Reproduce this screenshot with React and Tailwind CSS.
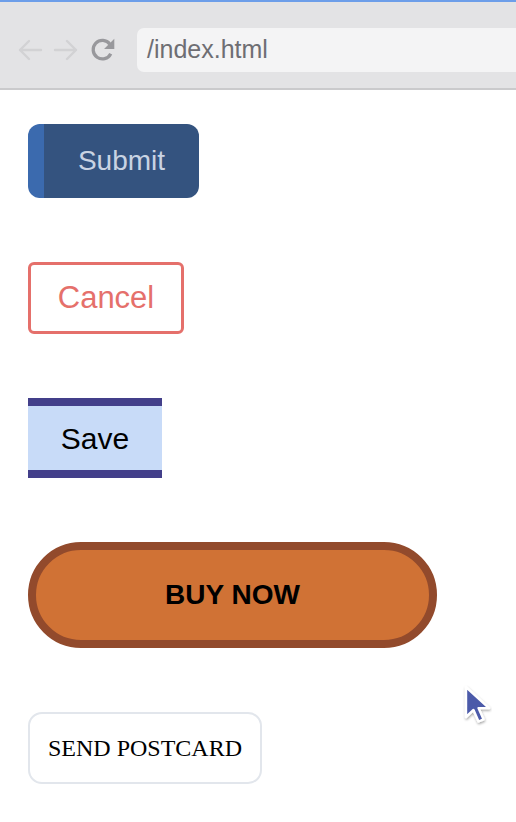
// App.jsx
// Browser chrome strip + a column of five differently styled buttons.

function Toolbar() {
  return (
    <div className="h-[90px] overflow-hidden bg-[#e3e3e5] border-t-2 border-[#6d9ee9] border-b-2 border-b-[#cacacc] flex items-center pt-[10px]">
      {/* back / forward / reload */}
      <div className="flex items-center pl-[17px] gap-[10px] shrink-0">
        <svg width="26" height="24" viewBox="0 0 26 24" fill="none" stroke="#d2d2d4" strokeWidth="2.4" strokeLinecap="round" strokeLinejoin="round">
          <path d="M24 12H3M12 3L3 12l9 9" />
        </svg>
        <svg width="26" height="24" viewBox="0 0 26 24" fill="none" stroke="#d2d2d4" strokeWidth="2.4" strokeLinecap="round" strokeLinejoin="round">
          <path d="M2 12h21M14 3l9 9-9 9" />
        </svg>
        <svg width="28" height="28" viewBox="0 0 26 26">
          <path d="M20.2 16.5A8.6 8.6 0 1 1 19.4 7.6" fill="none" stroke="#98989c" strokeWidth="3" />
          <path d="M23.5 2.5v9.5h-9.5z" fill="#98989c" />
        </svg>
      </div>
      {/* address bar */}
      <div className="ml-[20px] h-[44px] w-[420px] shrink-0 rounded-[7px] bg-[#f4f4f5] flex items-center pl-[10px] text-[25px] text-[#6e6e73] font-['Liberation_Sans',Arial,sans-serif]">
        /index.html
      </div>
    </div>
  );
}

function Cursor() {
  return (
    <svg className="absolute left-[462px] top-[684px]" width="30" height="42" viewBox="0 0 30 42">
      <defs>
        <filter id="sh" x="-30%" y="-30%" width="160%" height="160%">
          <feDropShadow dx="0.5" dy="1.5" stdDeviation="1.2" floodColor="#000" floodOpacity="0.35" />
        </filter>
      </defs>
      <path
        d="M4 3v30l7.5-7 5 11.5 5-2.2-5-11.2H27z"
        fill="#4b5aa9"
        stroke="#fff"
        strokeWidth="2.4"
        strokeLinejoin="round"
        filter="url(#sh)"
      />
    </svg>
  );
}

export default function App() {
  return (
    <div className="relative w-[516px] h-[822px] bg-white overflow-hidden font-['Liberation_Sans',Arial,sans-serif]">
      <Toolbar />

      <div className="flex flex-col items-start gap-16 pt-[34px] pl-[28px]">
        <button className="w-[171px] h-[74px] rounded-[12px] border-l-[16px] border-[#3b6aae] bg-[#34537f] text-[28px] text-[#c9d3e3] flex items-center justify-center">
          Submit
        </button>

        <button className="w-[156px] h-[72px] rounded-[6px] border-[3px] border-[#e5706b] bg-white text-[31px] text-[#e5706b] flex items-center justify-center">
          Cancel
        </button>

        <button className="w-[134px] h-[80px] border-y-[8px] border-[#433f8a] bg-[#c8dbf8] text-[30px] text-black flex items-center justify-center">
          Save
        </button>

        <button className="w-[409px] h-[106px] rounded-full border-[8px] border-[#924a2c] bg-[#d07235] text-[28px] font-bold text-black flex items-center justify-center">
          BUY NOW
        </button>

        <button className="w-[234px] h-[72px] rounded-[14px] border-2 border-[#e2e6ec] bg-white text-[24px] text-black font-['Liberation_Serif','Times_New_Roman',serif] flex items-center justify-center">
          SEND POSTCARD
        </button>
      </div>

      <Cursor />
    </div>
  );
}
